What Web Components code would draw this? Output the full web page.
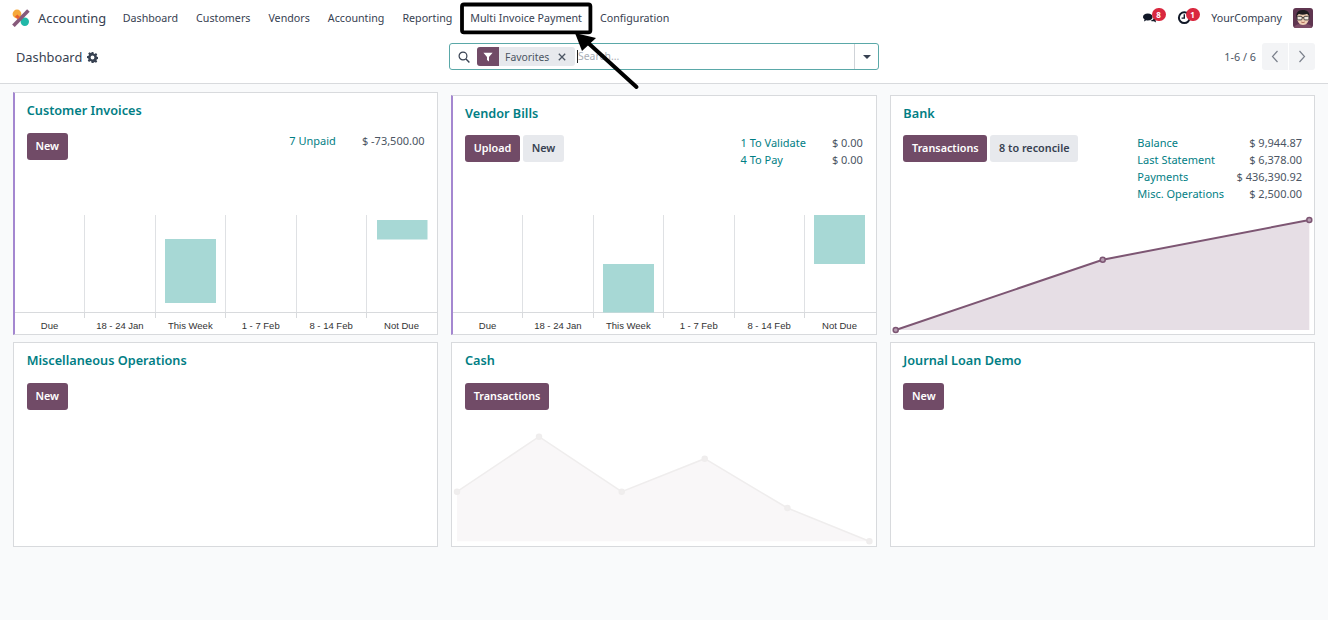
<!DOCTYPE html>
<html>
<head>
<meta charset="utf-8">
<title>Accounting</title>
<style>
  html, body { margin: 0; height: 100%; }
  body {
    background: #f9fafb;
    font-family: "Noto Sans", "Open Sans", sans-serif;
    color: #374151;
    overflow: hidden;
  }
</style>
</head>
<body>
<acc-app>
  <acc-navbar></acc-navbar>
  <acc-control-panel></acc-control-panel>
  <acc-dashboard>
    <acc-card class="raised" title="Customer Invoices" accent>
      <acc-button slot="actions" primary>New</acc-button>
      <acc-stats slot="stats" rows='[["7 Unpaid","$ -73,500.00"]]'></acc-stats>
      <acc-bars slot="chart" bars='[[150,51,24,64],[362,50.5,5,19.5]]'></acc-bars>
    </acc-card>
    <acc-card title="Vendor Bills" accent>
      <acc-button slot="actions" primary>Upload</acc-button>
      <acc-button slot="actions">New</acc-button>
      <acc-stats slot="stats" rows='[["1 To Validate","$ 0.00"],["4 To Pay","$ 0.00"]]'></acc-stats>
      <acc-bars slot="chart" bars='[[150,51,49,48.5],[361,51,0,49]]'></acc-bars>
    </acc-card>
    <acc-card title="Bank">
      <acc-button slot="actions" primary>Transactions</acc-button>
      <acc-button slot="actions">8 to reconcile</acc-button>
      <acc-stats slot="stats" class="narrow" rows='[["Balance","$ 9,944.87"],["Last Statement","$ 6,378.00"],["Payments","$ 436,390.92"],["Misc. Operations","$ 2,500.00"]]'></acc-stats>
      <acc-line slot="chart" height="120" stroke="#7d5673" fill="#e6dee5" dot="#b79db1" width-line="2" points="4.700,116 211.700,45.700 418.300,6"></acc-line>
    </acc-card>
    <acc-card title="Miscellaneous Operations">
      <acc-button slot="actions" primary>New</acc-button>
    </acc-card>
    <acc-card title="Cash">
      <acc-button slot="actions" primary>Transactions</acc-button>
      <acc-line slot="chart" height="117" stroke="#efeded" fill="#f9f7f8" dot="#f0eeee" width-line="1.500" points="5,62.700 87,7.700 169.700,62.700 252.700,29.700 335.400,79 417.400,112.300"></acc-line>
    </acc-card>
    <acc-card title="Journal Loan Demo">
      <acc-button slot="actions" primary>New</acc-button>
    </acc-card>
  </acc-dashboard>
  <acc-callout></acc-callout>
</acc-app>

<script>
class AccApp extends HTMLElement {
  constructor() {
    super();
    this.attachShadow({ mode: "open" });
    this.shadowRoot.innerHTML = `
    <style>
      :host { display: block; position: relative; height: 620px; }
    </style>
    <slot></slot>`;
  }
}

class AccNavbar extends HTMLElement {
  constructor() {
    super();
    this.attachShadow({ mode: "open" });
    const items = ["Dashboard", "Customers", "Vendors", "Accounting", "Reporting", "Multi Invoice Payment", "Configuration"];
    this.shadowRoot.innerHTML = `
    <style>
      :host { display: flex; align-items: center; height: 36px; background: #fff; padding: 0 15px 0 12px; font-size: 10.700px; color: #374151; }
      .logo { width: 18px; height: 18px; margin-right: 8px; flex: none; }
      .app { font-size: 12.900px; margin-right: 7.500px; color: #374151; }
      nav { display: flex; }
      nav span { padding: 0 9px; line-height: 36px; white-space: nowrap; }
      .right { margin-left: auto; display: flex; align-items: center; }
      .sys { position: relative; display: flex; width: 16px; height: 16px; }
      .sys b { position: absolute; left: 9.500px; top: -2px; width: 14px; height: 13px; border-radius: 7px; background: #d9283f; color: #fff; font: 700 8px/13px "Noto Sans", sans-serif; text-align: center; }
      .chat { margin-right: 18px; }
      .clock { margin-right: 19px; }
      .user { margin-right: 11px; }
      .avatar { width: 20px; height: 20px; border-radius: 3px; display: block; }
    </style>
    <svg class="logo" viewBox="0 0 18 18">
      <circle cx="5" cy="5" r="4.400" fill="#f5a93b"/>
      <circle cx="12.800" cy="12.800" r="4.200" fill="#21b8a8"/>
      <path d="M1.400 16.800 16.400 1.600" stroke="#875a7b" stroke-width="3.600" fill="none"/>
      <path d="M5.400 5.400 8 8 5.800 10.200 3 7.400Z" fill="#e8612f"/>
    </svg>
    <span class="app">Accounting</span>
    <nav>${items.map(t => `<span>${t}</span>`).join("")}</nav>
    <div class="right">
      <span class="sys chat">
        <svg viewBox="0 0 16 16" width="16" height="16"><g transform="translate(0 -1.500)"><path d="M1 8.500C1 6.500 3 5 5.800 5s4.800 1.500 4.800 3.500S8.600 12 5.800 12c-.5 0-1-.1-1.500-.2L2 13l.5-2.200C1.500 10.200 1 9.400 1 8.500Z" fill="#111827"/><path d="M11.500 7.500c1.900.2 3.200 1.200 3.200 2.600 0 .8-.5 1.500-1.200 2l.6 2-2.300-1.300c-1.200.1-2.600-.1-3.500-.8 2.800-.1 4.200-2 3.200-4.500Z" fill="#111827"/></g></svg>
        <b>8</b>
      </span>
      <span class="sys clock">
        <svg viewBox="0 0 16 16" width="16" height="16"><circle cx="8.300" cy="7.700" r="5.400" fill="none" stroke="#111827" stroke-width="2"/><path d="M8.300 4.300v3.800H5.600" fill="none" stroke="#111827" stroke-width="1.400"/></svg>
        <b>1</b>
      </span>
      <span class="user">YourCompany</span>
      <svg class="avatar" viewBox="0 0 20 20">
        <rect width="20" height="20" fill="#5f3550"/>
        <path d="M1 20c.6-3.200 3.800-4.200 9-4.200s8.400 1 9 4.200Z" fill="#7d4c66"/>
        <path d="M4 9c0-4 2.400-5.500 6-5.500S16 5 16 9c0 4.600-2.400 8-6 8s-6-3.400-6-8Z" fill="#f0cfb4"/>
        <path d="M3.500 10C2.700 5 4.600 2 9.600 2c5 0 7.600 2.600 6.900 8-.5-2-1.200-3.200-2.600-3.900-2.600.8-5.800.8-8 0C4.500 7 4 8.200 3.500 10Z" fill="#1f1c20"/>
        <g fill="#efe9e0" stroke="#35302f" stroke-width=".9"><rect x="4.200" y="8.300" width="4.900" height="3.600" rx="1"/><rect x="10.900" y="8.300" width="4.900" height="3.600" rx="1"/></g>
        <path d="M9.100 9.600h1.800" stroke="#35302f" stroke-width=".9"/>
        <path d="M8.200 14c1.100.7 2.500.7 3.600 0" stroke="#a8604f" stroke-width=".9" fill="none"/>
      </svg>
    </div>`;
  }
}

class AccControlPanel extends HTMLElement {
  constructor() {
    super();
    this.attachShadow({ mode: "open" });
    this.shadowRoot.innerHTML = `
    <style>
      :host { display: grid; grid-template-columns: 449px 430px 1fr; align-items: start; height: 47px; background: #fff; border-bottom: 1px solid #d8dadd; font-size: 10.800px; }
      .crumb { display: flex; align-items: center; gap: 5px; padding: 12px 0 0 16px; font-size: 12.800px; color: #374151; line-height: 18px; }
      .crumb svg { width: 11px; height: 11px; }
      .pager { display: flex; justify-content: flex-end; align-items: center; gap: 6px; padding: 7px 13px 0 0; color: #4b5563; }
      .btns { display: flex; gap: 1px; }
      .btns span { display: grid; place-items: center; width: 26px; height: 27px; background: #f3f4f6; }
      .btns span:first-child { border-radius: 3px 0 0 3px; }
      .btns span:last-child { border-radius: 0 3px 3px 0; }
      .btns svg { width: 8px; height: 13px; }
      acc-search { margin-top: 7px; }
    </style>
    <div class="crumb">Dashboard
      <svg viewBox="0 0 12 12"><path fill-rule="evenodd" fill="#374151" d="M5 0h2l.3 1.600 1.100.5L9.800 1.200l1.400 1.400-.9 1.400.5 1.100 1.700.4v2l-1.700.4-.5 1.100.9 1.400-1.400 1.400-1.400-.9-1.100.5L7 12H5l-.3-1.600-1.100-.5-1.400.9L.8 9.400l.9-1.400-.5-1.100L0 6.500v-2l1.700-.4.5-1.100-.9-1.400 1.400-1.400 1.400.9 1.100-.5ZM6 3.900a2.100 2.100 0 1 0 0 4.200 2.100 2.100 0 0 0 0-4.200Z"/></svg>
    </div>
    <acc-search></acc-search>
    <div class="pager">
      <span>1-6 / 6</span>
      <div class="btns">
        <span><svg viewBox="0 0 8 13"><path d="M6.500 1 1.500 6.500l5 5.500" fill="none" stroke="#7b818c" stroke-width="1.200"/></svg></span>
        <span><svg viewBox="0 0 8 13"><path d="M1.500 1l5 5.500-5 5.500" fill="none" stroke="#7b818c" stroke-width="1.200"/></svg></span>
      </div>
    </div>`;
  }
}

class AccSearch extends HTMLElement {
  constructor() {
    super();
    this.attachShadow({ mode: "open" });
    this.shadowRoot.innerHTML = `
    <style>
      :host { display: flex; align-items: center; height: 27px; box-sizing: border-box; border: 1px solid #5aa8a8; border-radius: 3px; background: #fff; font-size: 10.400px; color: #4b5563; }
      .glass { width: 12px; height: 12px; margin: 0 7px 0 8px; flex: none; }
      .facet { display: flex; align-items: center; height: 19px; width: 98px; background: #e7e9ed; border-radius: 3px; flex: none; }
      .facet i { display: grid; place-items: center; width: 22px; height: 19px; background: #714b67; border-radius: 3px 0 0 3px; flex: none; }
      .facet i svg { width: 10px; height: 10px; }
      .facet span { padding: 0 0 0 6px; flex: 1; }
      .facet svg.x { width: 8px; height: 8px; margin: 0 9px 0 0; flex: none; }
      .input { flex: 1; margin-left: 2px; border-left: 1px solid #222; height: 13px; line-height: 13px; color: #a9aeb6; }
      .caret { width: 23px; height: 100%; border-left: 1px solid #cfd3d8; display: grid; place-items: center; flex: none; }
      .caret svg { width: 8px; height: 4px; }
    </style>
    <svg class="glass" viewBox="0 0 12 12"><circle cx="5" cy="5" r="3.900" fill="none" stroke="#374151" stroke-width="1.200"/><path d="M8 8l3.400 3.400" stroke="#374151" stroke-width="1.400"/></svg>
    <div class="facet">
      <i><svg viewBox="0 0 10 10"><path d="M.4.8h9.200L6 5v4.400L4 8V5Z" fill="#fff"/></svg></i>
      <span>Favorites</span>
      <svg class="x" viewBox="0 0 8 8"><path d="M.8.8l6.400 6.400M7.200.8.800 7.200" stroke="#4b5563" stroke-width="1.300"/></svg>
    </div>
    <div class="input">Search...</div>
    <div class="caret"><svg viewBox="0 0 8 4"><path d="M0 0h8L4 4Z" fill="#374151"/></svg></div>`;
  }
}

class AccDashboard extends HTMLElement {
  constructor() {
    super();
    this.attachShadow({ mode: "open" });
    this.shadowRoot.innerHTML = `
    <style>
      :host { display: grid; grid-template-columns: repeat(3, 1fr); grid-template-rows: 240.400px 205px; gap: 7px 13px; padding: 10.600px 13px 0; }
    </style>
    <slot></slot>`;
  }
}

class AccCard extends HTMLElement {
  constructor() {
    super();
    this.attachShadow({ mode: "open" });
    this.shadowRoot.innerHTML = `
    <style>
      :host { display: flex; flex-direction: column; position: relative; box-sizing: border-box; background: #fff; border: 1px solid #d8dadd; padding: 0 12px 0 12.700px; min-width: 0; }
      :host([accent]) { border-left: 2px solid #a487d0; padding: 0 12.800px 0 11.700px; }
      :host(.raised) { margin-top: -2.600px; }
      h2 { margin: 7.250px 0 0; font-size: 12.700px; line-height: 20px; font-weight: 600; color: #017e84; }
      .row { display: flex; justify-content: space-between; align-items: flex-start; margin-top: 12.350px; }
      .actions { display: flex; gap: 3px; }
      .chart { margin: auto -12px 0 -12.700px; display: block; }
      :host([accent]) .chart { margin: auto -12.800px 0 -11.700px; }
    </style>
    <h2></h2>
    <div class="row">
      <div class="actions"><slot name="actions"></slot></div>
      <slot name="stats"></slot>
    </div>
    <div class="chart"><slot name="chart"></slot></div>`;
  }
  connectedCallback() {
    this.shadowRoot.querySelector("h2").textContent = this.getAttribute("title");
    this.removeAttribute("title");
  }
}

class AccButton extends HTMLElement {
  constructor() {
    super();
    this.attachShadow({ mode: "open" });
    this.shadowRoot.innerHTML = `
    <style>
      :host { display: inline-block; height: 27px; box-sizing: border-box; padding: 0 8.700px; border-radius: 3px; background: #e7e9ed; color: #374151; font-size: 10.800px; font-weight: 600; line-height: 26px; white-space: nowrap; }
      :host([primary]) { background: #714b67; color: #fff; }
    </style>
    <slot></slot>`;
  }
}

class AccStats extends HTMLElement {
  constructor() {
    super();
    this.attachShadow({ mode: "open" });
  }
  connectedCallback() {
    const rows = JSON.parse(this.getAttribute("rows"));
    this.shadowRoot.innerHTML = `
    <style>
      :host { display: grid; grid-template-columns: auto auto; column-gap: 26px; font-size: 11px; line-height: 16.800px; }
      :host(.narrow) { column-gap: 12.500px; }
      a { color: #017e84; }
      span { text-align: right; color: #4b5563; }
    </style>
    ${rows.map(r => `<a>${r[0]}</a><span>${r[1]}</span>`).join("")}`;
  }
}

// bars: [x, width, y, height] in chart coordinates
class AccBars extends HTMLElement {
  constructor() {
    super();
    this.attachShadow({ mode: "open" });
  }
  connectedCallback() {
    const labels = ["Due", "18 - 24 Jan", "This Week", "1 - 7 Feb", "8 - 14 Feb", "Not Due"];
    const bars = JSON.parse(this.getAttribute("bars"));
    const grid = [69, 140, 210, 281, 351];
    let lines = "", texts = "";
    grid.forEach(g => {
      const x = g + .5;
      lines += `<path d="M${x} 0V97" stroke="#dfe1e4"/><path d="M${x} 97v6" stroke="#d8dadd"/>`;
    });
    labels.forEach((t, i) => {
      texts += `<text x="${34.500 + i * 70.400}" y="113.500" text-anchor="middle">${t}</text>`;
    });
    this.shadowRoot.innerHTML = `
    <style>
      :host { display: block; height: 119px; }
      svg { display: block; width: 100%; height: 119px; overflow: visible; }
      text { font: 9.500px "Liberation Sans", Arial, sans-serif; fill: #333; }
    </style>
    <svg>
      ${lines}
      <path d="M0 97.500H423" stroke="#d8dadd"/>
      ${bars.map(b => `<rect x="${b[0]}" y="${b[2]}" width="${b[1]}" height="${b[3]}" fill="#a7d8d5"/>`).join("")}
      ${texts}
    </svg>`;
  }
}

class AccLine extends HTMLElement {
  constructor() {
    super();
    this.attachShadow({ mode: "open" });
  }
  connectedCallback() {
    const h = this.getAttribute("height");
    const stroke = this.getAttribute("stroke");
    const fill = this.getAttribute("fill");
    const dot = this.getAttribute("dot");
    const sw = this.getAttribute("width-line");
    const pts = this.getAttribute("points").split(" ").map(p => p.split(",").map(Number));
    const last = pts[pts.length - 1], first = pts[0];
    const base = Math.max(first[1], last[1]);
    const line = pts.map(p => p.join(",")).join(" ");
    this.shadowRoot.innerHTML = `
    <style>
      :host { display: block; height: ${h}px; }
      svg { display: block; width: 100%; height: ${h}px; overflow: visible; }
    </style>
    <svg>
      <polygon points="${first[0]},${base} ${line} ${last[0]},${base}" fill="${fill}"/>
      <polyline points="${line}" fill="none" stroke="${stroke}" stroke-width="${sw}"/>
      ${pts.map(p => `<circle cx="${p[0]}" cy="${p[1]}" r="2.500" fill="${dot}" stroke="${stroke}" stroke-width="1.500"/>`).join("")}
    </svg>`;
  }
}

// the black box and arrow someone drew over the screenshot
class AccCallout extends HTMLElement {
  constructor() {
    super();
    this.attachShadow({ mode: "open" });
    this.shadowRoot.innerHTML = `
    <style>
      :host { position: absolute; left: 0; top: 0; width: 100%; height: 100px; pointer-events: none; display: block; }
      svg { width: 100%; height: 100%; display: block; }
    </style>
    <svg>
      <rect x="462" y="4.500" width="128.400" height="27.800" rx="2" fill="none" stroke="#000" stroke-width="3.800"/>
      <path d="M636.500 87 586 41" stroke="#000" stroke-width="4" stroke-linecap="round" fill="none"/>
      <path d="M575 33 596 38 582 51Z" fill="#000"/>
    </svg>`;
  }
}

customElements.define("acc-app", AccApp);
customElements.define("acc-navbar", AccNavbar);
customElements.define("acc-control-panel", AccControlPanel);
customElements.define("acc-search", AccSearch);
customElements.define("acc-dashboard", AccDashboard);
customElements.define("acc-card", AccCard);
customElements.define("acc-button", AccButton);
customElements.define("acc-stats", AccStats);
customElements.define("acc-bars", AccBars);
customElements.define("acc-line", AccLine);
customElements.define("acc-callout", AccCallout);
</script>
</body>
</html>
